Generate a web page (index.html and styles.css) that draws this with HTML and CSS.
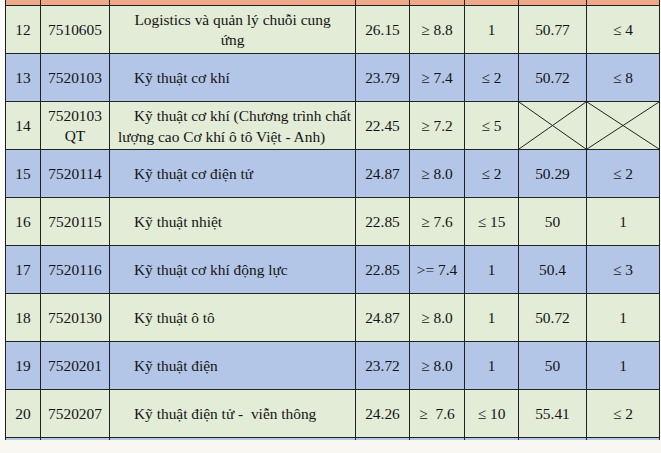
FILE: index.html
```html
<!DOCTYPE html>
<html lang="vi">
<head>
<meta charset="utf-8">
<link rel="stylesheet" href="styles.css">
</head>
<body>
<div class="sheet">
<table class="grid">
  <colgroup>
    <col class="c1"><col class="c2"><col class="c3"><col class="c4"><col class="c5"><col class="c6"><col class="c7"><col class="c8">
  </colgroup>
  <tr class="head"><td></td><td></td><td></td><td></td><td></td><td></td><td></td><td></td></tr>
  <tr class="g"><td>12</td><td>7510605</td><td class="center">Logistics và quản lý chuỗi cung<br>ứng</td><td>26.15</td><td>≥ 8.8</td><td>1</td><td>50.77</td><td>≤ 4</td></tr>
  <tr class="b"><td>13</td><td>7520103</td><td class="name">Kỹ thuật cơ khí</td><td>23.79</td><td>≥ 7.4</td><td>≤ 2</td><td>50.72</td><td>≤ 8</td></tr>
  <tr class="g"><td>14</td><td>7520103<br>QT</td><td class="name wrap">Kỹ thuật cơ khí (Chương trình chất<br>lượng cao Cơ khí ô tô Việt - Anh)</td><td>22.45</td><td>≥ 7.2</td><td>≤ 5</td><td class="cross"><svg viewBox="0 0 100 100" preserveAspectRatio="none"><path d="M0 0L100 100M100 0L0 100" /></svg></td><td class="cross"><svg viewBox="0 0 100 100" preserveAspectRatio="none"><path d="M0 0L100 100M100 0L0 100" /></svg></td></tr>
  <tr class="b"><td>15</td><td>7520114</td><td class="name">Kỹ thuật cơ điện tử</td><td>24.87</td><td>≥ 8.0</td><td>≤ 2</td><td>50.29</td><td>≤ 2</td></tr>
  <tr class="g"><td>16</td><td>7520115</td><td class="name">Kỹ thuật nhiệt</td><td>22.85</td><td>≥ 7.6</td><td>≤ 15</td><td>50</td><td>1</td></tr>
  <tr class="b"><td>17</td><td>7520116</td><td class="name">Kỹ thuật cơ khí động lực</td><td>22.85</td><td>&gt;= 7.4</td><td>1</td><td>50.4</td><td>≤ 3</td></tr>
  <tr class="g"><td>18</td><td>7520130</td><td class="name">Kỹ thuật ô tô</td><td>24.87</td><td>≥ 8.0</td><td>1</td><td>50.72</td><td>1</td></tr>
  <tr class="b"><td>19</td><td>7520201</td><td class="name">Kỹ thuật điện</td><td>23.72</td><td>≥ 8.0</td><td>1</td><td>50</td><td>1</td></tr>
  <tr class="g"><td>20</td><td>7520207</td><td class="name">Kỹ thuật điện tử -&nbsp; viễn thông</td><td>24.26</td><td>≥&nbsp; 7.6</td><td>≤ 10</td><td>55.41</td><td>≤ 2</td></tr>
  <tr class="b tail"><td></td><td></td><td></td><td></td><td></td><td></td><td></td><td></td></tr>
</table>
</div>
</body>
</html>
```
FILE: styles.css
```css
html, body {
  margin: 0;
  padding: 0;
  background: #f9f7f2;
}
body {
  width: 661px;
  height: 453px;
  overflow: hidden;
  font-family: "Liberation Serif", "Times New Roman", serif;
  color: #141414;
}
.sheet {
  height: 440px;
  overflow: hidden;
  padding-left: 5px;
  background: #fdfcfa;
}
.grid {
  border-collapse: collapse;
  table-layout: fixed;
  width: 655px;
  font-size: 15.4px;
}
.c1 { width: 35px; }
.c2 { width: 69px; }
.c3 { width: 246px; }
.c4 { width: 54px; }
.c5 { width: 55px; }
.c6 { width: 54px; }
.c7 { width: 68px; }
.c8 { width: 73px; }
.grid td {
  border: 1px solid #222;
  height: 47px;
  padding: 0 2px;
  text-align: center;
  vertical-align: middle;
  line-height: 20px;
  white-space: nowrap;
  overflow: hidden;
}
.grid tr.head td {
  height: 5px;
  background: #eea98a;
  border-top: none;
}
.g td { background: #e2ecd7; }
.b td { background: #b4c6e7; }
.grid td.name {
  text-align: left;
  padding-left: 8px;
  text-indent: 16px;
}
.grid td.wrap {
  line-height: 21px;
}
.grid td.cross {
  position: relative;
  padding: 0;
}
.cross svg {
  position: absolute;
  left: 0;
  top: 0;
  width: 100%;
  height: 100%;
}
.cross path {
  stroke: #222;
  stroke-width: 1;
  vector-effect: non-scaling-stroke;
  fill: none;
}
```
